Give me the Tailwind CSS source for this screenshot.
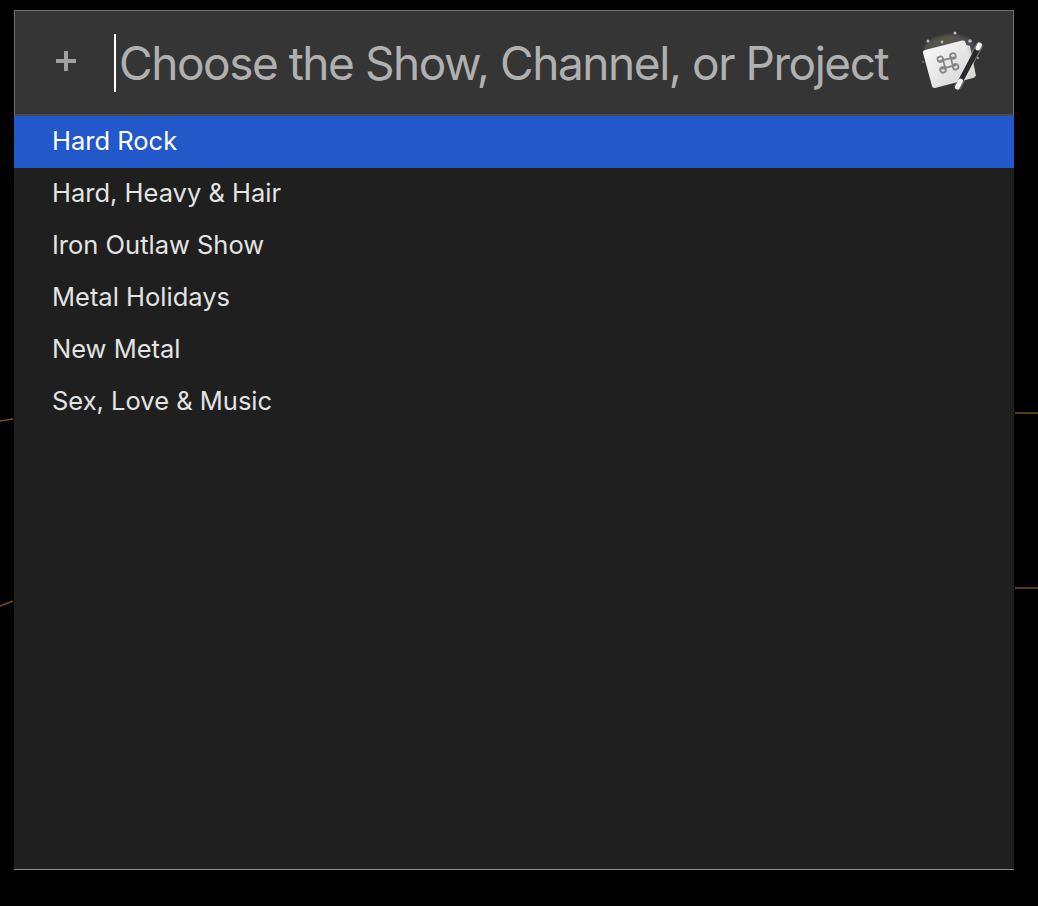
<!DOCTYPE html>
<html lang="en">
<head>
    <meta charset="UTF-8">
    <title>Choose the Show</title>
    <script src="https://cdn.jsdelivr.net/npm/@tailwindcss/browser@4"></script>
</head>
<body class="bg-black font-['Inter',sans-serif] antialiased">
    <div class="relative w-[1038px] h-[906px] bg-black overflow-hidden pt-[10px] pl-[14px]">
        <!-- faint lines behind the window -->
        <svg class="absolute left-0 top-0" width="1038" height="906" fill="none" stroke="#75501e" stroke-width="1.5">
            <path d="M0 421 L13 419"/>
            <path d="M0 606 L13 601"/>
            <path d="M1015 413 H1038"/>
            <path d="M1015 588 H1038"/>
        </svg>

        <div class="relative w-[1000px] h-[860px] bg-[#1f1f1f] flex flex-col border-b border-[#8c8c8c]">
            <!-- Input bar -->
            <div class="h-[106px] shrink-0 bg-[#353535] border border-b-2 border-[#6f6f6f] border-b-[#4a4a4a] flex items-center">
                <svg class="ml-[41px] mb-[3px] shrink-0" width="20" height="20" viewBox="0 0 20 20" fill="#a0a0a0">
                    <rect x="0" y="8" width="20" height="4"/>
                    <rect x="8" y="0" width="4" height="20"/>
                </svg>
                <div class="ml-[38px] w-[2px] h-[58px] bg-white shrink-0"></div>
                <div class="ml-[3px] text-[46px] font-[420] leading-none tracking-[-1.46px] text-[#b0b0b0] whitespace-nowrap">Choose the Show, Channel, or Project</div>
                <svg class="ml-auto mr-[29px] mb-[4px] shrink-0" width="64" height="64" viewBox="0 0 64 64">
                    <defs>
                        <linearGradient id="card" x1="0" y1="0" x2="1" y2="1">
                            <stop offset="0" stop-color="#fbfbfb"/>
                            <stop offset="1" stop-color="#d2d2d2"/>
                        </linearGradient>
                        <linearGradient id="halo" x1="0" y1="0" x2="1" y2="0">
                            <stop offset="0" stop-color="#55604c"/>
                            <stop offset="0.5" stop-color="#5e5c50"/>
                            <stop offset="1" stop-color="#544e66"/>
                        </linearGradient>
                        <filter id="soft"><feGaussianBlur stdDeviation="1.500"/></filter>
                    </defs>
                    <path d="M4 18 C12 5 40 0 54 14 L54 30 L8 30 Z" fill="url(#halo)" opacity="0.8" filter="url(#soft)"/>
                    <g fill="#bdbdbd">
                        <circle cx="8" cy="12" r="1.500"/><circle cx="22" cy="13" r="1.400"/>
                        <circle cx="35" cy="4" r="1.500"/><circle cx="50" cy="12" r="1.800"/>
                        <circle cx="58" cy="29" r="0.900"/><circle cx="3" cy="33" r="0.700"/>
                    </g>
                    <path d="M40 14 L50 17 L56 47 L42 51 Z" fill="#d9d8cf"/>
                    <path d="M3 24 Q2.500 21.500 5 21 L42 11.500 Q45 11 45.500 13.500 L55 46 Q55.500 48.500 53 49 L15 59 Q12.500 59.500 12 57 Z" fill="url(#card)"/>
                    <g fill="none" stroke="#858585" stroke-width="1.800" transform="rotate(-14 28 34)">
                        <path d="M24 28 V40 M32 28 V40 M20 30 H36 M20 38 H36"/>
                        <circle cx="21.500" cy="28.500" r="2.800"/><circle cx="34.500" cy="28.500" r="2.800"/>
                        <circle cx="21.500" cy="39.500" r="2.800"/><circle cx="34.500" cy="39.500" r="2.800"/>
                    </g>
                    <path d="M59 17 L38 57" stroke="#f2f2f2" stroke-width="7" stroke-linecap="round" opacity="0.35"/>
                    <path d="M59 17 L38 57" stroke="#29292e" stroke-width="5" stroke-linecap="round"/>
                    <path d="M59.500 16 L58 19" stroke="#f2f2f2" stroke-width="5" stroke-linecap="round"/>
                    <path d="M40.500 52 L37.500 58" stroke="#f2f2f2" stroke-width="5" stroke-linecap="round"/>
                </svg>
            </div>

            <!-- Results -->
            <ul class="text-[25.5px] text-[#e3e3e3]">
                <li class="h-[52px] pl-[38px] pb-[2px] flex items-center bg-[#2358cb] text-white">Hard Rock</li>
                <li class="h-[52px] pl-[38px] pb-[2px] flex items-center">Hard, Heavy &amp; Hair</li>
                <li class="h-[52px] pl-[38px] pb-[2px] flex items-center">Iron Outlaw Show</li>
                <li class="h-[52px] pl-[38px] pb-[2px] flex items-center">Metal Holidays</li>
                <li class="h-[52px] pl-[38px] pb-[2px] flex items-center">New Metal</li>
                <li class="h-[52px] pl-[38px] pb-[2px] flex items-center">Sex, Love &amp; Music</li>
            </ul>
        </div>
    </div>
</body>
</html>
